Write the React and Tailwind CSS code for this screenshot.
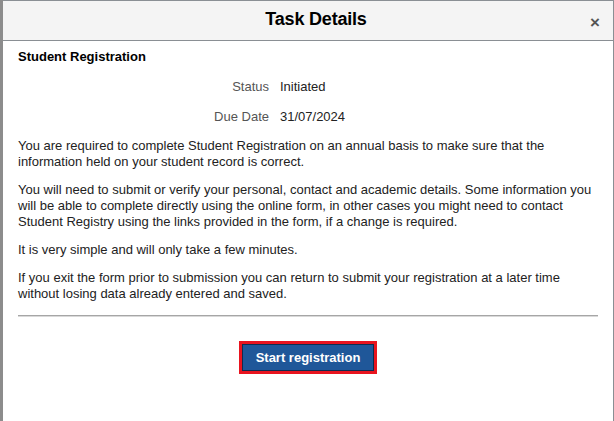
import React from 'react';

const TaskDetails = () => {
  return (
    <div className="flex w-[614px] h-[421px] bg-white font-['Liberation_Sans',Arial,sans-serif] text-[#222]">
      {/* backdrop strip */}
      <div className="w-[3px] bg-[#8c8c8c]" />

      <div className="flex-1 flex flex-col border-t border-r border-[#8a8f94] bg-white">
        {/* Header */}
        <div className="relative h-[40px] flex items-center justify-center pl-[16px] bg-[#f4f4f4] border-b border-[#8a8f94]">
          <h2 className="text-[18px] font-bold text-black leading-none -mt-[4px] tracking-[-0.2px]">Task Details</h2>
          <button className="absolute right-[13px] top-[13px] text-[#555] text-[17px] font-bold leading-none">×</button>
        </div>

        {/* Body */}
        <div className="px-[15px] pt-[8px] text-[13px] leading-[16px]">
          <div className="font-bold text-black">Student Registration</div>

          <div className="mt-[14px] grid grid-cols-[251px_1fr] gap-x-[11px] gap-y-[14px]">
            <span className="text-right text-[#555]">Status</span>
            <span className="text-[#222]">Initiated</span>
            <span className="text-right text-[#555]">Due Date</span>
            <span className="text-[#222]">31/07/2024</span>
          </div>

          <div className="mt-[13px] flex flex-col gap-[12px]">
            <p>
              You are required to complete Student Registration on an annual basis to make sure that the
              information held on your student record is correct.
            </p>
            <p>
              You will need to submit or verify your personal, contact and academic details. Some information you
              will be able to complete directly using the online form, in other cases you might need to contact
              Student Registry using the links provided in the form, if a change is required.
            </p>
            <p>It is very simple and will only take a few minutes.</p>
            <p>
              If you exit the form prior to submission you can return to submit your registration at a later time
              without losing data already entered and saved.
            </p>
          </div>

          <div className="mt-[13px] h-[2px] bg-[#a6a6a6] border-b border-[#d9d9d9]" />

          <div className="mt-[24px] flex justify-center">
            <div className="border-[3px] border-[#e8141f]">
              <button className="h-[27px] px-[13px] bg-[#1f5799] border border-[#0e2c50] text-white text-[13px] font-bold">
                Start registration
              </button>
            </div>
          </div>
        </div>
      </div>
    </div>
  );
};

export default function App() {
  return <TaskDetails />;
}
